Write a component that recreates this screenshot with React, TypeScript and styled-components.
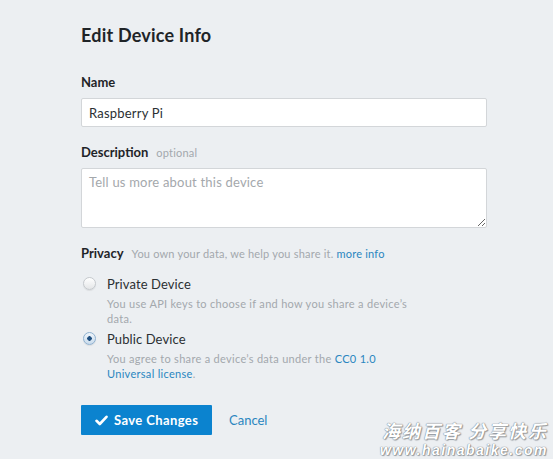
import React from "react";
import styled, { createGlobalStyle } from "styled-components";

const GlobalStyle = createGlobalStyle`
  html, body {
    margin: 0;
    padding: 0;
    background: #eceff2;
  }
  body {
    font-family: Lato, "Open Sans", "Liberation Sans", sans-serif;
    color: #1f2428;
  }
`;

const Page = styled.div`
  position: relative;
  width: 553px;
  height: 459px;
  overflow: hidden;
  box-sizing: border-box;
  padding: 24px 0 0 81px;
`;

const Form = styled.form`
  width: 406px;
  display: flex;
  flex-direction: column;
`;

const Title = styled.h1`
  margin: 0 0 28px;
  font-size: 18px;
  line-height: 22px;
  font-weight: 700;
  letter-spacing: 0.2px;
  color: #1f2428;
`;

const Label = styled.div<{ $gap?: number }>`
  display: flex;
  align-items: baseline;
  gap: 8px;
  margin-bottom: ${({ $gap }) => $gap ?? 8}px;
  font-size: 13px;
  line-height: 16px;
  font-weight: 700;
  color: #1f2428;
`;

const Hint = styled.span`
  font-size: 11px;
  font-weight: 400;
  letter-spacing: 0.2px;
  color: #a3a8ad;
`;

const Link = styled.a`
  color: #2a86c0;
  text-decoration: none;
`;

const TextInput = styled.input`
  box-sizing: border-box;
  width: 100%;
  height: 29px;
  margin: 0 0 17px;
  padding: 0 7px;
  border: 1px solid #d3d6d9;
  border-radius: 2px;
  background: #fff;
  font-family: inherit;
  font-size: 13px;
  letter-spacing: 0.2px;
  color: #2b2f33;
  outline: none;
`;

const TextArea = styled.textarea`
  box-sizing: border-box;
  width: 100%;
  height: 60px;
  margin: 0 0 17px;
  padding: 5px 7px;
  border: 1px solid #d3d6d9;
  border-radius: 2px;
  background: #fff;
  font-family: inherit;
  font-size: 13px;
  line-height: 16px;
  letter-spacing: 0.2px;
  color: #2b2f33;
  outline: none;
  resize: vertical;
  display: block;

  &::placeholder {
    color: #a4a8ac;
  }
`;

const Option = styled.label<{ $top: number }>`
  display: grid;
  grid-template-columns: 13px 1fr;
  column-gap: 11px;
  margin-top: ${({ $top }) => $top}px;
  padding-left: 2px;
  cursor: pointer;
`;

const Radio = styled.span<{ $checked?: boolean }>`
  box-sizing: border-box;
  width: 13px;
  height: 13px;
  margin-top: 2px;
  border-radius: 50%;
  border: 1px solid ${({ $checked }) => ($checked ? "#8fb1d0" : "#c5c9cd")};
  background: ${({ $checked }) =>
    $checked
      ? "radial-gradient(circle, #1f4f80 0 2px, transparent 2.5px), linear-gradient(#eef4fa, #c9dbec)"
      : "linear-gradient(#ffffff, #e4e6e8)"};
  box-shadow: 0 1px 1px rgba(0, 0, 0, 0.08);
`;

const OptionTitle = styled.span`
  font-size: 13px;
  line-height: 18px;
  letter-spacing: 0.1px;
  color: #2b2f33;
`;

const OptionText = styled.span`
  grid-column: 2;
  margin-top: 3px;
  max-width: 312px;
  font-size: 11px;
  line-height: 15px;
  letter-spacing: 0.3px;
  color: #a3a8ad;
`;

const Actions = styled.div`
  display: flex;
  align-items: center;
  gap: 17px;
  margin-top: 24px;
`;

const PrimaryButton = styled.button`
  display: inline-flex;
  align-items: center;
  gap: 6px;
  height: 30px;
  width: 131px;
  padding: 0 0 0 14px;
  border: none;
  border-radius: 1px;
  background: #0b83cf;
  color: #fff;
  font-family: inherit;
  font-size: 13px;
  font-weight: 700;
  letter-spacing: 0.4px;
  cursor: pointer;
`;

const TextButton = styled.button`
  border: none;
  background: none;
  padding: 0;
  font-family: inherit;
  font-size: 13px;
  color: #2a86c0;
  cursor: pointer;
`;

const Watermark = styled.div`
  position: absolute;
  right: 5px;
  bottom: 1px;
  display: flex;
  flex-direction: column;
  align-items: flex-end;
  font-style: italic;
  font-weight: 700;
  color: #ffffff;
  text-shadow: 0 0 1px #7a7f84, 0 0 1px #7a7f84, 1px 1px 1px #9aa0a5;
  pointer-events: none;
`;

const WatermarkTitle = styled.span`
  font-family: "Noto Sans CJK SC", sans-serif;
  font-size: 18px;
  line-height: 24px;
  letter-spacing: 2px;
`;

const WatermarkUrl = styled.span`
  font-family: "Liberation Sans", sans-serif;
  font-size: 14px;
  line-height: 16px;
  letter-spacing: 1.5px;
`;

function Check() {
  return (
    <svg width="13" height="11" viewBox="0 0 13 11" aria-hidden="true">
      <path
        d="M1.5 5.8 L4.8 9 L11.5 1.8"
        fill="none"
        stroke="#fff"
        strokeWidth="2.6"
        strokeLinecap="round"
        strokeLinejoin="round"
      />
    </svg>
  );
}

export default function App() {
  return (
    <>
      <GlobalStyle />
      <Page>
        <Form onSubmit={(e) => e.preventDefault()}>
          <Title>Edit Device Info</Title>

          <Label>Name</Label>
          <TextInput defaultValue="Raspberry Pi" />

          <Label $gap={7}>
            Description <Hint>optional</Hint>
          </Label>
          <TextArea placeholder="Tell us more about this device" />

          <Label $gap={0}>
            Privacy
            <Hint>
              You own your data, we help you share it.{" "}
              <Link href="#">more info</Link>
            </Hint>
          </Label>

          <Option $top={13}>
            <Radio />
            <OptionTitle>Private Device</OptionTitle>
            <OptionText>
              You use API keys to choose if and how you share a device’s data.
            </OptionText>
          </Option>

          <Option $top={4}>
            <Radio $checked />
            <OptionTitle>Public Device</OptionTitle>
            <OptionText>
              You agree to share a device’s data under the{" "}
              <Link href="#">CC0 1.0</Link>{" "}
              <Link href="#">Universal license</Link>.
            </OptionText>
          </Option>

          <Actions>
            <PrimaryButton type="submit">
              <Check />
              Save Changes
            </PrimaryButton>
            <TextButton type="button">Cancel</TextButton>
          </Actions>
        </Form>

        <Watermark>
          <WatermarkTitle>海纳百客 分享快乐</WatermarkTitle>
          <WatermarkUrl>www.hainabaike.com</WatermarkUrl>
        </Watermark>
      </Page>
    </>
  );
}
